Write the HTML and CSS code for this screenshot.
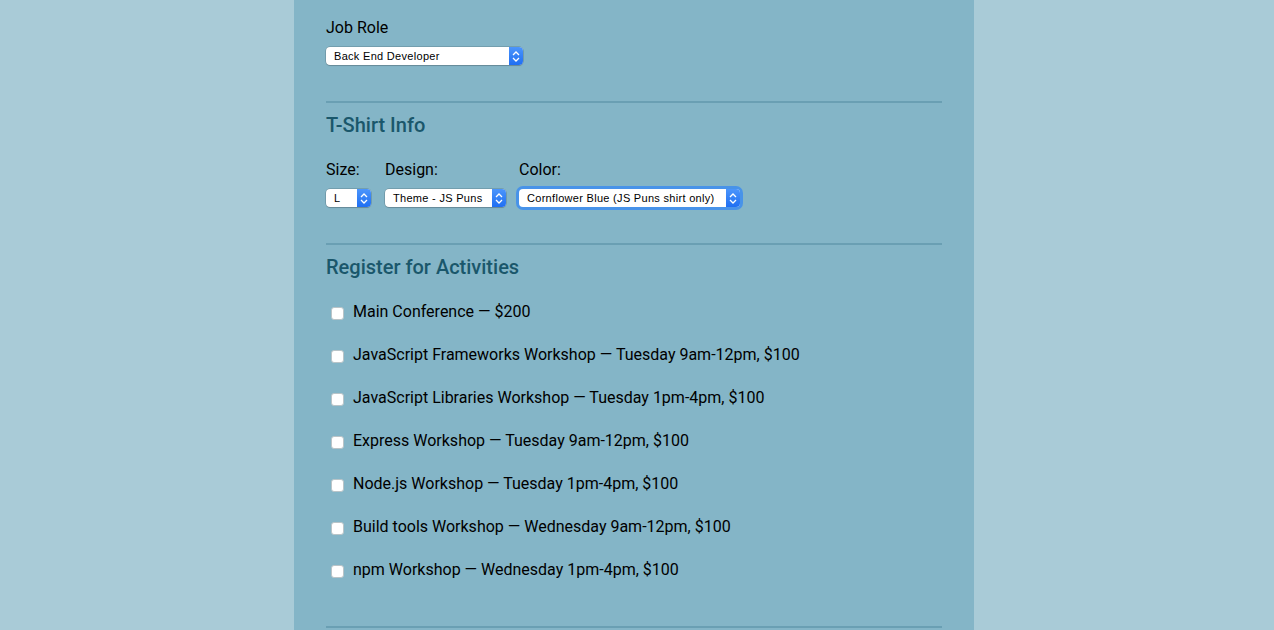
FILE: index.html
```html
<!DOCTYPE html>
<html>
<head>
<meta charset="utf-8">
<link rel="stylesheet" href="styles.css">
</head>
<body>
<div class="page">
  <div class="form">
    <div class="label">Job Role</div>
    <div class="select w-job"><span class="sel-text">Back End Developer</span><span class="arrow"><svg width="8" height="11" viewBox="0 0 8 11"><path d="M1 4 L4 1 L7 4 M1 7 L4 10 L7 7" fill="none" stroke="#fff" stroke-width="1.3"/></svg></span></div>
    <div class="rule"></div>

    <h2 class="heading">T-Shirt Info</h2>
    <div class="shirt-row">
      <div class="field">
        <div class="label">Size:</div>
        <div class="select w-size"><span class="sel-text">L</span><span class="arrow"><svg width="8" height="11" viewBox="0 0 8 11"><path d="M1 4 L4 1 L7 4 M1 7 L4 10 L7 7" fill="none" stroke="#fff" stroke-width="1.3"/></svg></span></div>
      </div>
      <div class="field">
        <div class="label">Design:</div>
        <div class="select w-design"><span class="sel-text">Theme - JS Puns</span><span class="arrow"><svg width="8" height="11" viewBox="0 0 8 11"><path d="M1 4 L4 1 L7 4 M1 7 L4 10 L7 7" fill="none" stroke="#fff" stroke-width="1.3"/></svg></span></div>
      </div>
      <div class="field">
        <div class="label">Color:</div>
        <div class="select w-color focused"><span class="sel-text">Cornflower Blue (JS Puns shirt only)</span><span class="arrow"><svg width="8" height="11" viewBox="0 0 8 11"><path d="M1 4 L4 1 L7 4 M1 7 L4 10 L7 7" fill="none" stroke="#fff" stroke-width="1.3"/></svg></span></div>
      </div>
    </div>
    <div class="rule"></div>

    <h2 class="heading">Register for Activities</h2>
    <div class="activities">
      <label class="act"><span class="box"></span>Main Conference — $200</label>
      <label class="act"><span class="box"></span>JavaScript Frameworks Workshop — Tuesday 9am-12pm, $100</label>
      <label class="act"><span class="box"></span>JavaScript Libraries Workshop — Tuesday 1pm-4pm, $100</label>
      <label class="act"><span class="box"></span>Express Workshop — Tuesday 9am-12pm, $100</label>
      <label class="act"><span class="box"></span>Node.js Workshop — Tuesday 1pm-4pm, $100</label>
      <label class="act"><span class="box"></span>Build tools Workshop — Wednesday 9am-12pm, $100</label>
      <label class="act"><span class="box"></span>npm Workshop — Wednesday 1pm-4pm, $100</label>
    </div>
    <div class="rule last"></div>
  </div>
</div>
</body>
</html>
```

FILE: styles.css
```css
html, body {
  margin: 0;
  padding: 0;
  background: #a9cbd7;
  height: 100%;
  overflow: hidden;
}
body {
  font-family: Roboto, "Liberation Sans", sans-serif;
  color: #000;
}
.page {
  width: 680px;
  margin-left: 294px;
  min-height: 100%;
  background: #84b5c7;
}
.form {
  padding: 17px 32px 40px 32px;
}
.label {
  font-size: 16px;
  line-height: 22px;
  height: 20px;
}
.select {
  margin-top: 10px;
  height: 18px;
  box-sizing: border-box;
  background: #fff;
  border-radius: 4px;
  box-shadow: 0 0 0 0.5px rgba(0,0,0,0.25), 0 1px 1px rgba(0,0,0,0.12);
  display: flex;
  align-items: center;
  position: relative;
  font-family: "Liberation Sans", Arial, sans-serif;
  font-size: 11px;
  letter-spacing: 0.3px;
  color: #000;
}
.sel-text {
  flex: 1;
  padding-left: 8px;
  white-space: nowrap;
  overflow: hidden;
}
.arrow {
  width: 14px;
  height: 18px;
  flex: none;
  background: linear-gradient(#4b95fb, #1f6ff2);
  border-radius: 0 4px 4px 0;
  display: flex;
  align-items: center;
  justify-content: center;
}
.w-job { width: 197px; }
.w-size { width: 45px; }
.w-design { width: 121px; }
.w-color { width: 221px; }
.focused {
  box-shadow: 0 0 0 3px rgba(61,141,238,0.85);
}
.rule {
  margin-top: 36px;
  height: 2px;
  background: #6a9fb3;
}
.heading {
  margin: 10px 0 0 0;
  font-size: 20px;
  line-height: 24px;
  font-weight: 500;
  color: #1a576b;
}
.shirt-row {
  display: flex;
  margin-top: 22px;
}
.field { margin-right: 14px; }
.field:nth-child(2) { margin-right: 13px; }
.activities {
  margin-top: 22px;
  display: flex;
  flex-direction: column;
  gap: 23px;
}
.act {
  font-size: 16px;
  line-height: 22px;
  height: 20px;
  display: flex;
  align-items: flex-start;
}
.box {
  flex: none;
  width: 13px;
  height: 13px;
  box-sizing: border-box;
  background: #fff;
  border: 1px solid #b9c4c8;
  border-radius: 3px;
  margin-left: 5px;
  margin-right: 9px;
  margin-top: 6px;
}
.rule.last { margin-top: 47px; }
```
